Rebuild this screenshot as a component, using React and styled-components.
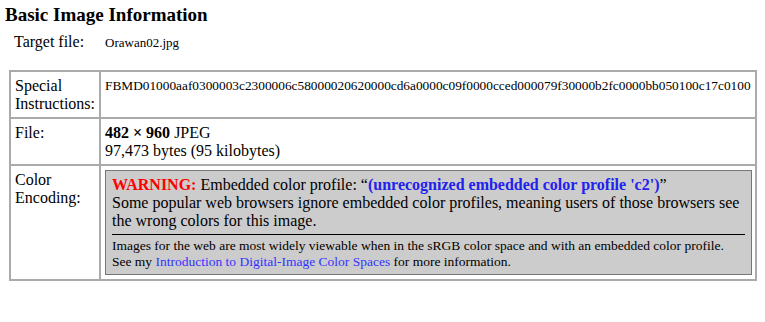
import React from 'react'
import styled, {createGlobalStyle} from 'styled-components'

const serif = `"Liberation Serif", "Times New Roman", Times, serif`

const Global = createGlobalStyle`
  body {
    margin: 0;
    background: #fff;
    color: #000;
    font-family: ${serif};
  }
`

const Page = styled.div`
  padding: 4px 5px;
  font-family: ${serif};
`

const Title = styled.h3`
  margin: 0;
  font-family: ${serif};
  font-size: 19px;
  font-weight: bold;
  line-height: 22px;
`

const TargetRow = styled.div`
  display: flex;
  align-items: baseline;
  margin: 7px 0 0 9px;
  font-family: ${serif};
`

const TargetLabel = styled.span`
  font-size: 16px;
  line-height: 18px;
  width: 91px;
`

const TargetValue = styled.span`
  font-size: 13px;
`

const Table = styled.table`
  margin: 19px 0 0 4px;
  width: 746px;
  border-collapse: collapse;
  border: 2px solid #aaa;
  font-family: ${serif};
`

const Label = styled.td`
  width: 80px;
  vertical-align: top;
  padding: 5px 4px 4px;
  border: 2px solid #aaa;
  font-family: ${serif};
  font-size: 16px;
  line-height: 18px;
`

const Value = styled.td`
  vertical-align: top;
  padding: ${p => p.$tight ? '4px 3px 4px 4px' : '5px 4px 4px'};
  border: 2px solid #aaa;
  font-family: ${serif};
  font-size: ${p => p.$small ? '13.33px' : '16px'};
  line-height: 18px;
  white-space: ${p => p.$small ? 'nowrap' : 'normal'};
`

const Warn = styled.div`
  background: #ccc;
  border: 1px solid #777;
  padding: 5px 6px 4px 6px;
`

const WarnText = styled.div`
  font-family: ${serif};
  font-size: 16px;
  line-height: 18px;
`

const Red = styled.b`
  color: #f00;
`

const Blue = styled.b`
  color: #22e;
`

const Note = styled.div`
  border-top: 1px solid #000;
  margin-top: 4px;
  padding-top: 3px;
  font-family: ${serif};
  font-size: 13.5px;
  line-height: 16px;
`

const Link = styled.a`
  color: #33f;
  text-decoration: none;
`

export default function App () {
  return <>
    <Global />
    <Page>
      <Title>Basic Image Information</Title>
      <TargetRow>
        <TargetLabel>Target file:</TargetLabel>
        <TargetValue>Orawan02.jpg</TargetValue>
      </TargetRow>
      <Table>
        <tbody>
          <tr>
            <Label>Special Instructions:</Label>
            <Value $small>FBMD01000aaf0300003c2300006c58000020620000cd6a0000c09f0000cced000079f30000b2fc0000bb050100c17c0100</Value>
          </tr>
          <tr>
            <Label>File:</Label>
            <Value><b>482 × 960</b> JPEG<br />97,473 bytes (95 kilobytes)</Value>
          </tr>
          <tr>
            <Label>Color Encoding:</Label>
            <Value $tight>
              <Warn>
                <WarnText>
                  <Red>WARNING:</Red> Embedded color profile: “<Blue>(unrecognized embedded color profile 'c2')</Blue>”<br />
                  Some popular web browsers ignore embedded color profiles, meaning users of those browsers see the wrong colors for this image.
                </WarnText>
                <Note>
                  Images for the web are most widely viewable when in the sRGB color space and with an embedded color profile. See my <Link href="#">Introduction to Digital-Image Color Spaces</Link> for more information.
                </Note>
              </Warn>
            </Value>
          </tr>
        </tbody>
      </Table>
    </Page>
  </>
}
